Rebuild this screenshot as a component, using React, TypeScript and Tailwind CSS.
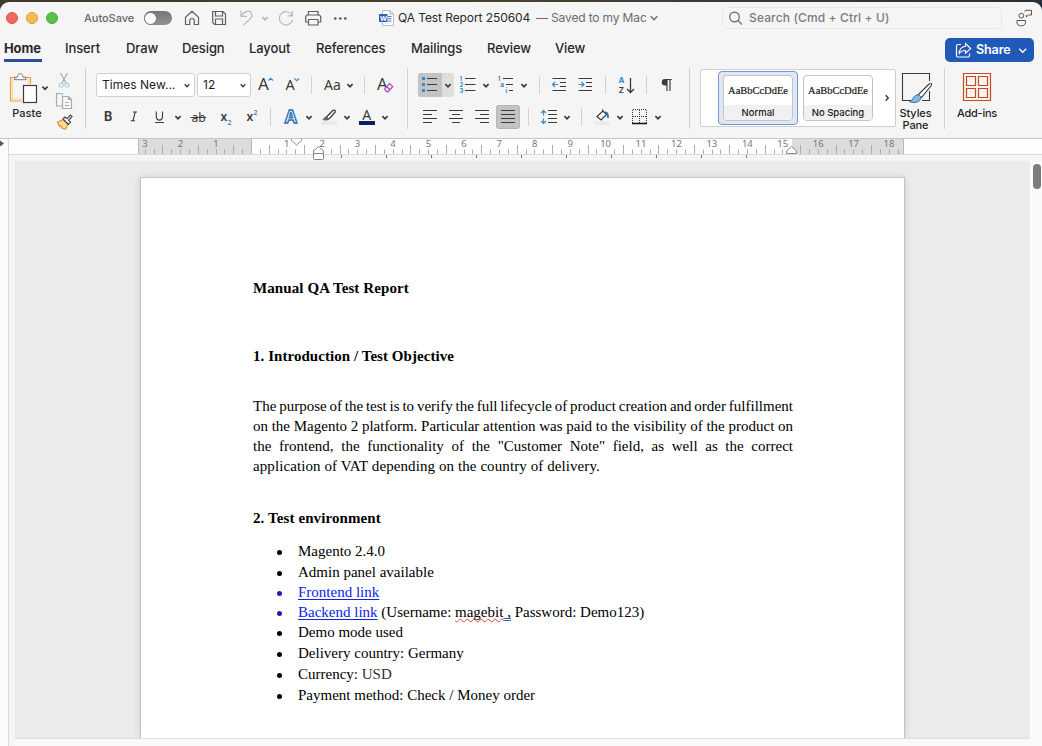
import React from "react";

type IconProps = { x: number; y: number; w: number; h: number; className?: string; children: React.ReactNode };

/* Icon drawn in window coordinates; the view box selects its cell. */
function Icon({ x, y, w, h, className = "", children }: IconProps) {
  return (
    <svg
      width={w}
      height={h}
      viewBox={`${x} ${y} ${w} ${h}`}
      fill="none"
      stroke="#3b3b3b"
      strokeWidth="1.2"
      className={`block shrink-0 ${className}`}
    >
      {children}
    </svg>
  );
}

const INK = "#3b3b3b";
const BLUE = "#3a8bcd";

function Chevron({ x, y, color = INK, s = 2.6, sw = 1.7 }: { x: number; y: number; color?: string; s?: number; sw?: number }) {
  return <path d={`M${x - s} ${y - s / 2}l${s} ${s}l${s} ${-s}`} stroke={color} strokeWidth={sw} />;
}

type GlyphProps = { x: number; y: number; size: number; fill?: string; weight?: number; font?: string; children: React.ReactNode };
function Glyph({ x, y, size, fill = INK, weight = 400, font = "Noto Sans", children }: GlyphProps) {
  return (
    <text x={x} y={y} fontSize={size} fill={fill} stroke="none" fontWeight={weight} fontFamily={`"${font}", sans-serif`}>
      {children}
    </text>
  );
}

function Lines({ items }: { items: [number, number, number][] }) {
  return <path d={items.map(([a, b, y]) => `M${a} ${y}H${b}`).join("")} stroke={INK} strokeWidth="1.2" />;
}

function TitleBar() {
  return (
    <div className="flex h-8 items-center">
      <div className="ml-1.5 flex gap-2">
        <span className="size-3 rounded-full border border-[#dd5144] bg-[#ed6a5e]" />
        <span className="size-3 rounded-full border border-[#dba034] bg-[#f5bd4f]" />
        <span className="size-3 rounded-full border border-[#4aab3a] bg-[#5ac24b]" />
      </div>
      <div className="ml-[26px] w-[60px] text-[11px] font-medium tracking-[-0.02px] whitespace-nowrap text-[#686868]">AutoSave</div>
      <div className="flex h-[14px] w-7 shrink-0 items-center rounded-full bg-linear-to-b from-[#757575] to-[#929292]">
        <span className="size-[13px] rounded-full border border-[#777] bg-white" />
      </div>
      <Icon x={172} y={2} w={34} h={32}>
        <path d="M185.500 17.200L192 11.200L198.500 17.200V24.500H194.300V20.800A2.300 2.300 0 0 0 189.700 20.800V24.500H185.500Z" stroke="#606060" />
      </Icon>
      <Icon x={206} y={2} w={26} h={32}>
        <path d="M212.700 11.500H223L225.500 14V24.500H214.500L212.700 22.500ZM215.500 11.500V16H222.500V11.500M215.500 24V19H222.500V24" stroke="#606060" />
      </Icon>
      <Icon x={232} y={2} w={43} h={32}>
        <path d="M241 10.500V16.300H247M241.300 16C245 10.500 250 10 251.600 13.200C253.500 17 249 20 243.500 25" stroke="#b9b9b9" />
        <Chevron x={265} y={18.500} color="#b4b4b4" />
      </Icon>
      <Icon x={275} y={2} w={25} h={32}>
        <path d="M292.300 11V15.800H287.500M292 15.300A6.700 6.700 0 1 0 292.500 20" stroke="#b9b9b9" />
      </Icon>
      <Icon x={300} y={2} w={28} h={32}>
        <path d="M308.500 15V11.500H318V15M308.500 22H305.700V16.500L307 15H319.500L320.700 16.500V22H318M308.500 19.500H318V25H308.500Z" stroke="#606060" />
      </Icon>
      <Icon x={328} y={2} w={50} h={32}>
        <g fill="#555" stroke="none">
          <circle cx="335.300" cy="18.500" r="1.300" />
          <circle cx="340.300" cy="18.500" r="1.300" />
          <circle cx="345.300" cy="18.500" r="1.300" />
        </g>
      </Icon>
      <Icon x={378} y={2} w={20} h={32}>
        <path d="M382.500 10.500H390L393.500 14V25.500H382.500Z" fill="#fff" stroke="#bdbdbd" strokeWidth="1" />
        <path d="M390 10.500V14H393.500" stroke="#aaa" strokeWidth="1" />
        <path d="M388 16.500H391.500M388 18.700H391.500M388 21H391.500" stroke="#2f7fe0" strokeWidth="1" />
        <rect x="379" y="14" width="8.500" height="8" rx=".8" fill="#2860b8" stroke="none" />
        <text x="380" y="20.600" fontSize="6.800" fontWeight="700" fill="#fff" stroke="none" fontFamily="Inter, sans-serif">W</text>
      </Icon>
      <div className="w-[138px] text-[12px] tracking-[-0.08px] whitespace-nowrap text-[#2a2a2a]">QA Test Report 250604</div>
      <div className="w-[112px] text-[12px] tracking-[-0.15px] whitespace-nowrap text-[#6c6c6c]">— Saved to my Mac</div>
      <Icon x={648} y={2} w={14} h={32}>
        <Chevron x={654} y={18} color="#6c6c6c" s={3.300} sw={1.400} />
      </Icon>
      <div className="ml-[60px] flex h-[22px] w-[280px] shrink-0 items-center rounded-[5px] border border-[#e7e7e7] bg-[#f5f5f5]">
        <Icon x={723} y={7} w={26} h={22}>
          <circle cx="734.500" cy="17" r="4.800" stroke="#767676" strokeWidth="1.400" />
          <path d="M738 20.500L742 24.500" stroke="#767676" strokeWidth="1.500" />
        </Icon>
        <span className="text-[12px] font-medium tracking-[0.13px] whitespace-nowrap text-[#7b7b7b]">Search (Cmd + Ctrl + U)</span>
      </div>
      <Icon x={1002} y={2} w={40} h={32}>
        <circle cx="1021.300" cy="15.700" r="2.400" stroke="#555" strokeWidth="1" />
        <path d="M1017 20.500H1025.500V22A4.200 3.800 0 0 1 1017 22ZM1024.500 11.500L1025.500 10.300H1031.500V15H1028.500L1026.300 17V15" stroke="#555" strokeWidth="1" />
      </Icon>
    </div>
  );
}

function Tabs() {
  return (
    <div className="flex h-8 text-[13px] font-medium whitespace-nowrap text-[#282828]">
      <div className="ml-1 h-7 w-[38px] border-b-[3px] border-[#2b4f96] pt-1 leading-5 font-bold tracking-[-0.1px]">Home</div>
      <div className="flex pt-1 leading-5 tracking-[-0.1px]">
        <span className="ml-[23px] w-[61px]">Insert</span>
        <span className="w-14">Draw</span>
        <span className="w-[67px]">Design</span>
        <span className="w-[67px]">Layout</span>
        <span className="w-[95px]">References</span>
        <span className="w-[76px]">Mailings</span>
        <span className="w-[68px]">Review</span>
        <span>View</span>
      </div>
      <div className="mt-1 mr-2 ml-auto flex h-6 w-[89px] items-center rounded-[5px] bg-[#2159b8] text-white">
        <Icon x={945} y={38} w={31} h={24}>
          <path d="M961 44.500H958A1.500 1.500 0 0 0 956.500 46V55.500A1.500 1.500 0 0 0 958 57H968A1.500 1.500 0 0 0 969.500 55.500V53.500" stroke="#fff" />
          <path d="M965.500 43.500L970.700 48.500L965.500 53.200V50.500C962 50.500 960.500 51.500 959 54C959.300 49.500 961.500 46.700 965.500 46.300Z" stroke="#fff" strokeWidth="1.100" />
        </Icon>
        <span className="w-[38px] text-[12.5px] font-semibold tracking-[-0.1px]">Share</span>
        <Icon x={1014} y={38} w={18} h={24}>
          <Chevron x={1022.700} y={50.500} color="#fff" s={3.500} sw={1.300} />
        </Icon>
      </div>
    </div>
  );
}

function Divider({ tall = false }: { tall?: boolean }) {
  return <span className={tall ? "mt-0.5 h-[61px] w-px shrink-0 bg-[#d3d3d3]" : "h-[18px] w-px shrink-0 bg-[#d3d3d3]"} />;
}

function Clipboard() {
  return (
    <div className="flex w-[85px]">
      <div className="w-[52px]">
        <Icon x={0} y={66} w={52} h={40}>
          <path d="M15 77.500H10.500V101H22M26 77.500H30.500V84" stroke="#e89a46" strokeWidth="1.100" />
          <path d="M12.200 79V99.500H22M28.800 79V84" stroke="#f9dfa0" strokeWidth="2" />
          <path d="M14.500 79.700V77.200H17.500C17.500 72.500 23 72.500 23 77.200H26V79.700Z" fill="#fafafa" stroke="#777" strokeWidth="1" />
          <rect x="23.500" y="85.500" width="13" height="17" fill="#fff" stroke={INK} />
          <Chevron x={45} y={88} />
        </Icon>
        <div className="w-[54px] text-center text-[11px] leading-[15px] font-medium text-[#1f1f1f]">Paste</div>
      </div>
      <div>
        <Icon x={52} y={66} w={24} h={24}>
          <path d="M60.500 73L66.500 84M67.500 73L61.500 84" stroke="#a9a9a9" />
          <circle cx="61.200" cy="85" r="2" stroke="#a9cdea" />
          <circle cx="67" cy="85" r="2" stroke="#a9cdea" />
        </Icon>
        <Icon x={52} y={90} w={24} h={22}>
          <path d="M62 106H56.500V93.500H61.500L63 95" stroke="#ababab" />
          <path d="M62.500 96.500H68.500L71.500 99.500V108.500H62.500ZM68.500 96.500V99.500H71.500M65 102.500H69M65 105.500H69" stroke="#ababab" fill="#f8f8f8" />
        </Icon>
        <Icon x={52} y={112} w={24} h={22}>
          <path d="M57.500 122.300L63 119.700L68 124.700L65.300 129.300L62 128L61 126L59.500 126.300Z" fill="#fbd9a0" stroke="#e58a2c" />
          <path d="M63 119L65 117L67 118.700L70.500 115L72 116.500L68.700 120.300L70.500 122.300L68.500 124.500Z" fill="#fff" stroke="#444" />
        </Icon>
      </div>
    </div>
  );
}

function FontGroup() {
  return (
    <div className="w-[321px] pt-[7px] pl-[10px]">
      <div className="flex h-6 items-center">
        <div className="flex h-6 w-[99px] shrink-0 items-center rounded-[3px] border border-[#cfcfcf] bg-white text-[12px] text-[#1b1b1b]">
          <span className="ml-[5px] w-[79px] tracking-[0.03px] whitespace-nowrap">Times New...</span>
          <Icon x={181} y={74} w={12} h={22}><Chevron x={187} y={85.500} s={2.300} sw={1.400} /></Icon>
        </div>
        <div className="ml-0.5 flex h-6 w-[54px] shrink-0 items-center rounded-[3px] border border-[#cfcfcf] bg-white text-[12px] text-[#1b1b1b]">
          <span className="ml-[5px] w-[34px]">12</span>
          <Icon x={237} y={74} w={12} h={22}><Chevron x={243} y={85.500} s={2.300} sw={1.400} /></Icon>
        </div>
        <Icon x={251} y={73} w={27} h={24}>
          <Glyph x={258} y={90} size={17}>A</Glyph>
          <path d="M268.500 80.500L270.700 78.300L273 80.500" stroke={BLUE} />
        </Icon>
        <Icon x={278} y={73} w={33} h={24}>
          <Glyph x={285.500} y={90} size={14.500}>A</Glyph>
          <path d="M294.500 78.500L296.700 80.700L299 78.500" stroke={BLUE} />
        </Icon>
        <Divider />
        <Icon x={312} y={73} w={52} h={24}>
          <Glyph x={324} y={90} size={14}>Aa</Glyph>
          <Chevron x={350} y={85.500} />
        </Icon>
        <Divider />
        <Icon x={365} y={73} w={36} h={24}>
          <Glyph x={377} y={90} size={16.500}>A</Glyph>
          <path d="M385 88.500L389.500 83.500L392.800 86.500L388 92H387L385 90ZM386.800 86.700L390 89.700" fill="#f5e9f8" stroke="#a04db5" />
        </Icon>
      </div>
      <div className="mt-2 flex h-6 items-center">
        <Icon x={96} y={105} w={26} h={24}><Glyph x={104} y={121} size={12.500} weight={700} font="Inter">B</Glyph></Icon>
        <Icon x={122} y={105} w={24} h={24}><path d="M133 112H137M130.700 120.700H135M135.200 112L133 120.700" strokeWidth="1.100" /></Icon>
        <Icon x={146} y={105} w={41} h={24}>
          <path d="M156.300 111.500V116.500C156.300 121.300 162.500 121.300 162.500 116.500V111.500M155 122.500H164" strokeWidth="1.100" />
          <Chevron x={178} y={117.500} />
        </Icon>
        <Icon x={187} y={105} w={24} h={24}>
          <Glyph x={191.500} y={121.500} size={12}>ab</Glyph>
          <path d="M190.500 117.500H206" strokeWidth="1" />
        </Icon>
        <Icon x={211} y={105} w={26} h={24}>
          <Glyph x={220.500} y={121} size={12} weight={600}>x</Glyph>
          <Glyph x={227.500} y={124.500} size={7} fill={BLUE} weight={600}>2</Glyph>
        </Icon>
        <Icon x={237} y={105} w={33} h={24}>
          <Glyph x={246.500} y={121} size={12} weight={600}>x</Glyph>
          <Glyph x={253.500} y={114.500} size={7} fill={BLUE} weight={600}>2</Glyph>
        </Icon>
        <Divider />
        <Icon x={271} y={105} w={44} h={24}>
          <text x="284.800" y="122.500" fontSize="17.500" fontWeight="700" fill="#fff" stroke="#2b72bb" strokeWidth="1.400" fontFamily='"Noto Sans", sans-serif'>A</text>
          <Chevron x={309} y={117.500} />
        </Icon>
        <Icon x={315} y={105} w={38} h={24}>
          <path d="M327 116.500L333 110.300Q335.500 109.300 335.200 112L329.500 118.500L326.500 119.500Z" fill="#fff" strokeWidth="1.300" />
          <path d="M322.800 119.800L326 116.300L328.800 119.300L326.500 120Z" fill="#666" stroke="#666" strokeWidth=".8" />
          <rect x="321" y="121" width="16" height="4" fill="#eaeaea" stroke="none" />
          <Chevron x={347} y={117.500} />
        </Icon>
        <Icon x={353} y={105} w={40} h={24}>
          <Glyph x={362.300} y={119.500} size={14}>A</Glyph>
          <rect x="359" y="121" width="16" height="4" fill="#002060" stroke="none" />
          <Chevron x={385} y={117.500} />
        </Icon>
      </div>
    </div>
  );
}

function ParagraphGroup() {
  return (
    <div className="w-[281px] pt-[7px] pl-[10px]">
      <div className="flex h-6 items-center">
        <div className="flex h-6 w-9 shrink-0 overflow-hidden rounded-[3px] bg-[#dedede]">
          <Icon x={418} y={73} w={24} h={24} className="bg-[#c3c3c3]">
            <path d="M422 78.500H425M422 84.500H425M422 90.500H425" stroke={BLUE} strokeWidth="3" />
            <Lines items={[[427, 437, 78.500], [427, 437, 84.500], [427, 437, 90.500]]} />
          </Icon>
          <Icon x={442} y={73} w={12} h={24}><Chevron x={448} y={85.500} /></Icon>
        </div>
        <Icon x={454} y={73} w={39} h={24}>
          <Glyph x={459.500} y={80.700} size={6} fill={BLUE} weight={700} font="Inter">1</Glyph>
          <Glyph x={459.500} y={87} size={6} fill={BLUE} weight={700} font="Inter">2</Glyph>
          <Glyph x={459.500} y={93.200} size={6} fill={BLUE} weight={700} font="Inter">3</Glyph>
          <Lines items={[[465, 475.500, 78.500], [465, 475.500, 84.500], [465, 475.500, 90.500]]} />
          <Chevron x={486} y={85.500} />
        </Icon>
        <Icon x={493} y={73} w={46} h={24}>
          <Glyph x={497.800} y={80.700} size={6} fill={BLUE} weight={700} font="Inter">1</Glyph>
          <Glyph x={500.300} y={87} size={6.500} fill={BLUE} weight={700} font="Inter">a</Glyph>
          <Glyph x={505.500} y={93.200} size={6.500} fill={BLUE} weight={700} font="Inter">i</Glyph>
          <Lines items={[[503, 513, 78.500], [506, 513, 84.500], [509, 513, 90.500]]} />
          <Chevron x={524} y={85.500} />
        </Icon>
        <Divider />
        <Icon x={540} y={73} w={32} h={24}>
          <Lines items={[[552.500, 566, 78.500], [560, 566, 82.500], [560, 566, 86.500], [552.500, 566, 90.500]]} />
          <path d="M558 84.500H552.500M555 82L552.500 84.500L555 87" stroke={BLUE} />
        </Icon>
        <Icon x={572} y={73} w={33} h={24}>
          <Lines items={[[578.500, 592, 78.500], [586, 592, 82.500], [586, 592, 86.500], [578.500, 592, 90.500]]} />
          <path d="M578.500 84.500H584M581.500 82L584 84.500L581.500 87" stroke={BLUE} />
        </Icon>
        <Divider />
        <Icon x={606} y={73} w={40} h={24}>
          <Glyph x={618.500} y={83.200} size={8} fill={BLUE} weight={700} font="Inter">A</Glyph>
          <Glyph x={618.700} y={93} size={8} weight={600} font="Inter">Z</Glyph>
          <path d="M630.500 78V92.500M627 89L630.500 92.500L634 89" strokeWidth="1.300" />
        </Icon>
        <Divider />
        <Icon x={647} y={73} w={34} h={24}>
          <path d="M667 79.500V91M670 79.500V91M671.700 79.500H665.500" strokeWidth="1.200" />
          <path d="M667 79H665A3.200 3.200 0 0 0 665 85.500H667Z" fill={INK} stroke="none" />
        </Icon>
      </div>
      <div className="mt-2 flex h-6 items-center">
        <Icon x={418} y={105} w={24} h={24}><Lines items={[[423, 437, 110.500], [423, 432, 114.500], [423, 437, 118.500], [423, 432, 122.500]]} /></Icon>
        <Icon x={442} y={105} w={28} h={24}><Lines items={[[449, 463, 110.500], [452, 460, 114.500], [449, 463, 118.500], [452, 460, 122.500]]} /></Icon>
        <Icon x={470} y={105} w={26} h={24}><Lines items={[[475, 489, 110.500], [480, 489, 114.500], [475, 489, 118.500], [480, 489, 122.500]]} /></Icon>
        <Icon x={496} y={105} w={24} h={24} className="rounded-[3px] bg-[#c3c3c3]">
          <rect x="496.500" y="105.500" width="23" height="23" rx="2.500" stroke="#b5b5b5" strokeWidth="1" />
          <Lines items={[[501, 515, 110.500], [501, 515, 114.500], [501, 515, 118.500], [501, 515, 122.500]]} />
        </Icon>
        <span className="w-2 shrink-0" />
        <Divider />
        <Icon x={529} y={105} w={52} h={24}>
          <path d="M543.500 110.500V115.500M541 113L543.500 110.500L546 113M543.500 118.500V123.500M541 121L543.500 123.500L546 121" stroke={BLUE} />
          <Lines items={[[548, 557, 110.500], [548, 557, 114.500], [548, 557, 118.500], [548, 557, 122.500]]} />
          <Chevron x={567} y={117.500} />
        </Icon>
        <Divider />
        <Icon x={582} y={105} w={44} h={24}>
          <path d="M602.500 110.500L606.500 114.500L601 120L597 116.500L602.500 111.500V109.500" fill="#fff" strokeWidth="1.200" />
          <path d="M605 112.300Q608.300 112 608 118" stroke="#2b6cb0" strokeWidth="1.800" />
          <rect x="594" y="121" width="16" height="4" fill="#eaeaea" stroke="none" />
          <Chevron x={620} y={117.500} />
        </Icon>
        <Icon x={626} y={105} w={55} h={24}>
          <path d="M632.500 123V109.500H646.500V123M639.500 110V123M633 116.500H646" strokeDasharray="1 1" strokeWidth="1" />
          <path d="M632 123.500H647" stroke="#111" strokeWidth="1.400" />
          <Chevron x={658} y={117.500} />
        </Icon>
      </div>
    </div>
  );
}

function StyleCard({ name }: { name: string }) {
  return (
    <div className="flex h-[46px] w-[70px] flex-col overflow-hidden rounded-[4px] border border-[#c4c4c4] bg-white text-center whitespace-nowrap text-[#1a1a1a]">
      <div className="h-[30px] pt-[7px] font-['Liberation_Serif',serif] text-[10.5px] leading-4 tracking-[-0.02px] [-webkit-text-stroke:0.2px]">AaBbCcDdEe</div>
      <div className="h-4 bg-[#f1f1f1] pt-px text-[9.5px] leading-[14px] font-medium">{name}</div>
    </div>
  );
}

function StylesGroup() {
  return (
    <>
      <div className="mt-[3px] ml-[10px] flex h-[58px] w-[196px] shrink-0 rounded-[2px] border border-[#cfcfcf] bg-white">
        <div className="mt-px ml-[17px] flex h-[54px] w-20 items-center justify-center rounded-[4px] border border-[#7795cc] bg-[#dfe6f4]">
          <StyleCard name="Normal" />
        </div>
        <div className="mt-[5px] ml-[5px]"><StyleCard name="No Spacing" /></div>
        <Icon x={873} y={70} w={20} h={54}>
          <path d="M885.700 95.300L888.300 98L885.700 100.700" strokeWidth="1.400" />
        </Icon>
      </div>
      <div className="ml-0.5 w-[46px]">
        <Icon x={898} y={66} w={46} h={40}>
          <path d="M911 100.500H902.500V73.500H929.500V81M929.500 91V100.500H922" strokeWidth="1.100" />
          <path d="M918 95L928.500 84.500Q932.500 82 931.300 85.500L921.500 97.500Z" fill="#fff" strokeWidth="1.100" />
          <path d="M909.500 101.700C913.500 100.500 912.500 95.500 917.500 95C920.500 95 921.700 97.500 920.300 99.700C918 103 913 103 909.500 101.700Z" fill="#86b8e6" stroke="#2f74ba" strokeWidth="1" />
        </Icon>
        <div className="mt-px w-[35px] text-center text-[11px] leading-3 font-medium tracking-[-0.1px] text-[#1f1f1f]">Styles<br />Pane</div>
      </div>
      <Divider tall />
      <div className="ml-3">
        <Icon x={957} y={66} w={40} h={40}>
          <path d="M963.500 73.500H990.500V100.500H963.500ZM966.500 76.500H975.500V85.500H966.500ZM978.500 76.500H987.500V85.500H978.500ZM966.500 88.500H975.500V97.500H966.500ZM978.500 88.500H987.500V97.500H978.500Z" stroke="#c84a1c" />
        </Icon>
        <div className="w-10 text-[11px] leading-[15px] font-medium tracking-[-0.25px] whitespace-nowrap text-[#1f1f1f]">Add-ins</div>
      </div>
    </>
  );
}

const UNIT = 35.43;
const ZERO = 251.5;

function Ruler() {
  const ticks: React.ReactNode[] = [];
  for (let q = -12; q <= 73; q++) {
    if (q === 0) continue;
    const x = Math.round(ZERO + (q * UNIT) / 4 - 0.5) + 0.5;
    const half = Math.abs(q % 4) === 2;
    ticks.push(<path key={q} d={`M${x} ${half ? 145 : 149.5}V154`} stroke="#ababab" strokeWidth="1" />);
  }
  const nums = [-3, -2, -1, ...Array.from({ length: 18 }, (_, i) => i + 1)];
  return (
    <svg width="1033" height="22" viewBox="9 139 1033 22" fill="none" className="block">
      <rect x="9" y="139" width="1033" height="15.500" fill="#fdfdfd" />
      <rect x="9" y="154" width="1033" height="7" fill="#f5f5f5" />
      <rect x="138" y="139" width="113.500" height="15" fill="#dcdcdc" />
      <rect x="792" y="139" width="112" height="15" fill="#dcdcdc" />
      <path d="M9 154.500H1042" stroke="#dadada" />
      <path d="M138.500 139V154M251.500 139V154M903.500 139V154" stroke="#b8b8b8" />
      {ticks}
      {nums.map((n) => (
        <text key={n} x={ZERO + n * UNIT - 0.2} y="147.300" textAnchor="middle" fontSize="9.500" fill="#777" fontFamily='"Noto Sans", sans-serif'>
          {Math.abs(n)}
        </text>
      ))}
      {Array.from({ length: 10 }, (_, i) => (
        <path key={i} d={`M${341.5 + i * 45} 155V158`} stroke="#777" />
      ))}
      <path d="M291.500 139V140.500L296.500 145L301.500 140.500V139" fill="#fff" stroke="#8a8a8a" />
      <path d="M313.500 153.500V151L318.500 146.500L323.500 151V153.500ZM313.500 153.500V158.500Q313.500 159.500 314.500 159.500H322.500Q323.500 159.500 323.500 158.500V153.500" fill="#fff" stroke="#858585" />
      <path d="M786.500 153.500V151L791.500 146.500L796.500 151V153.500Z" fill="#fff" stroke="#858585" />
    </svg>
  );
}

function Bullet({ blue = false, gap = false, children }: { blue?: boolean; gap?: boolean; children: React.ReactNode }) {
  return (
    <li className={gap ? "mb-px flex h-5 items-center" : "flex h-5 items-center"}>
      <span className={blue ? "mt-0.5 mr-4 size-[5px] rounded-full bg-[#1b1fae]" : "mt-0.5 mr-4 size-[5px] rounded-full bg-black"} />
      <span className="leading-5">{children}</span>
    </li>
  );
}

function Page() {
  return (
    <div className="ml-[125px] h-[561px] w-[765px] border border-b-0 border-[#c2c2c2] bg-white pt-[100px] pl-28 font-['Liberation_Serif','Times_New_Roman',serif] text-[15px] leading-5 whitespace-nowrap text-black shadow-[0_0_7px_rgba(0,0,0,0.12)]">
      <h1 className="h-[68px] font-bold tracking-[0.1px]">Manual QA Test Report</h1>
      <h2 className="h-[50px] font-bold tracking-[0.05px]">1. Introduction / Test Objective</h2>
      <div className="w-[540px]">
        <p className="[word-spacing:-1px] [text-align-last:justify]">The purpose of the test is to verify the full lifecycle of product creation and order fulfillment</p>
        <p className="[word-spacing:-0.5px] [text-align-last:justify]">on the Magento 2 platform. Particular attention was paid to the visibility of the product on</p>
        <p className="[text-align-last:justify]">the frontend, the functionality of the &quot;Customer Note&quot; field, as well as the correct</p>
        <p className="tracking-[0.09px]">application of VAT depending on the country of delivery.</p>
      </div>
      <h2 className="mt-8 h-8 font-bold tracking-[0.1px]">2. Test environment</h2>
      <ul className="pt-px pl-6">
        <Bullet gap>Magento 2.4.0</Bullet>
        <Bullet>Admin panel available</Bullet>
        <Bullet blue><span className="text-[#0b24e8] underline underline-offset-2">Frontend link</span></Bullet>
        <Bullet blue>
          <span className="text-[#0b24e8] underline underline-offset-2">Backend link</span> (Username:{" "}
          <span className="underline decoration-[#e0402c] decoration-wavy decoration-1 [text-decoration-skip-ink:none] [text-underline-offset:1px]">magebit</span>
          <span className="underline decoration-[#2b62c4] decoration-double decoration-1 [text-decoration-skip-ink:none] [text-underline-offset:1px]"> ,</span> Password: Demo123)
        </Bullet>
        <Bullet gap>Demo mode used</Bullet>
        <Bullet gap>Delivery country: Germany</Bullet>
        <Bullet gap>Currency: <span className="text-[#333]">USD</span></Bullet>
        <Bullet>Payment method: Check / Money order</Bullet>
      </ul>
    </div>
  );
}

export default function App() {
  return (
    <div className="h-[746px] w-[1042px] overflow-hidden bg-linear-to-r from-[#3b3a2c] via-[#4b4030] to-[#26303a] pt-0.5 font-['Inter',sans-serif]">
      <div className="flex h-[744px] flex-col overflow-hidden rounded-t-[9px] bg-[#f5f5f5]">
        <TitleBar />
        <Tabs />
        <div className="flex h-[73px] border-b border-[#c6c6c6]">
          <Clipboard />
          <Divider tall />
          <FontGroup />
          <Divider tall />
          <ParagraphGroup />
          <Divider tall />
          <StylesGroup />
        </div>
        <div className="flex h-[607px]">
          <div className="w-[9px] border-r border-[#dadada] bg-[#fbfbfb]">
            <Icon x={0} y={139} w={8} h={12}><path d="M0 140.500L4 143.500L0 146.500Z" fill="#555" stroke="none" /></Icon>
          </div>
          <div className="w-[1033px]">
            <Ruler />
            <div className="flex">
              <div className="w-1.5 bg-[#f5f5f5]" />
              <div className="h-[578px] w-[1015px] overflow-hidden border-b border-[#dddddd] bg-[#ebebeb] pt-4">
                <Page />
              </div>
              <div className="w-3 bg-[#fafafa] pt-[3px] pl-[3px]">
                <div className="h-[25px] w-2 rounded-full bg-[#7c7c7c]" />
              </div>
            </div>
            <div className="ml-1.5 h-2 bg-[#fafafa]" />
          </div>
        </div>
      </div>
    </div>
  );
}
